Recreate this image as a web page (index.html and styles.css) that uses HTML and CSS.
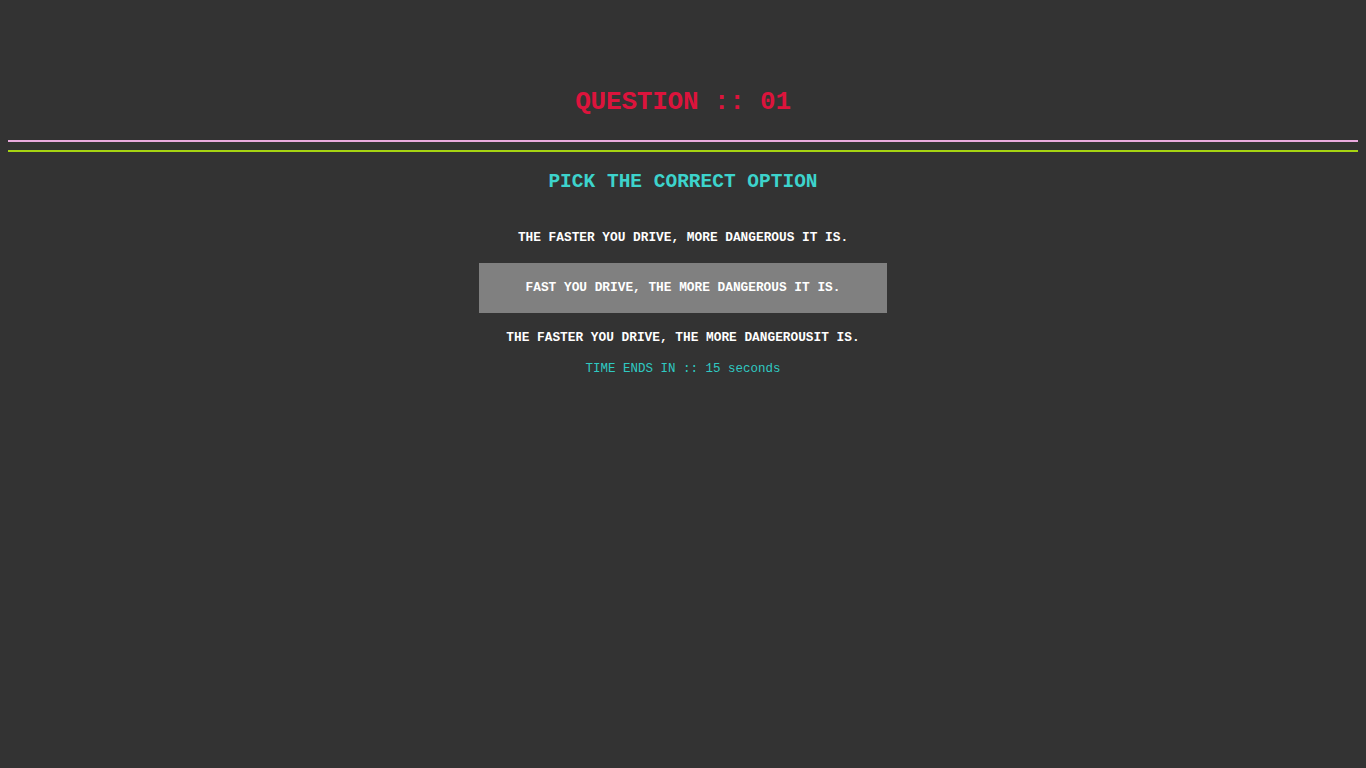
FILE: index.html
```html
<!DOCTYPE html>
<html>
<head>
<meta charset="utf-8">
<title>Quiz</title>
<link rel="stylesheet" href="styles.css">
</head>
<body>
<div class="quiz">
  <h1 class="question-title">QUESTION :: 01</h1>
  <hr class="line line-pink">
  <hr class="line line-green">
  <h2 class="prompt">PICK THE CORRECT OPTION</h2>
  <ul class="options">
    <li class="option">THE FASTER YOU DRIVE, MORE DANGEROUS IT IS.</li>
    <li class="option option-active">FAST YOU DRIVE, THE MORE DANGEROUS IT IS.</li>
    <li class="option">THE FASTER YOU DRIVE, THE MORE DANGEROUSIT IS.</li>
  </ul>
  <p class="timer">TIME ENDS IN :: 15 seconds</p>
</div>
</body>
</html>
```
FILE: styles.css
```css
html, body {
  background: #333333;
}
body {
  margin: 8px;
  font-family: "Liberation Mono", "Courier New", monospace;
  color: #ffffff;
}
.quiz {
  padding-top: 74px;
  display: flex;
  flex-direction: column;
  align-items: stretch;
}
.question-title {
  margin: 0;
  text-align: center;
  color: #dc143c;
  font-size: 26px;
  line-height: 40px;
  font-weight: bold;
  letter-spacing: -0.2px;
}
.line {
  margin: 0;
  border: 0;
  height: 2px;
}
.line-pink {
  margin-top: 18px;
  background: #eaaade;
}
.line-green {
  margin-top: 8px;
  background: #a6d412;
}
.prompt {
  margin: 15px 0 0;
  text-align: center;
  color: #3dd3cc;
  font-size: 19.5px;
  line-height: 30px;
  font-weight: bold;
}
.options {
  list-style: none;
  margin: 16px auto 0;
  padding: 0;
  width: 408px;
  display: flex;
  flex-direction: column;
}
.option {
  box-sizing: border-box;
  height: 50px;
  padding-bottom: 2px;
  display: flex;
  align-items: center;
  justify-content: center;
  font-size: 12.8px;
  font-weight: bold;
  color: #ffffff;
  white-space: nowrap;
}
.option-active {
  background: #808080;
}
.timer {
  margin: 0;
  text-align: center;
  color: #2fc9c2;
  font-size: 12.5px;
  line-height: 12px;
}
```
